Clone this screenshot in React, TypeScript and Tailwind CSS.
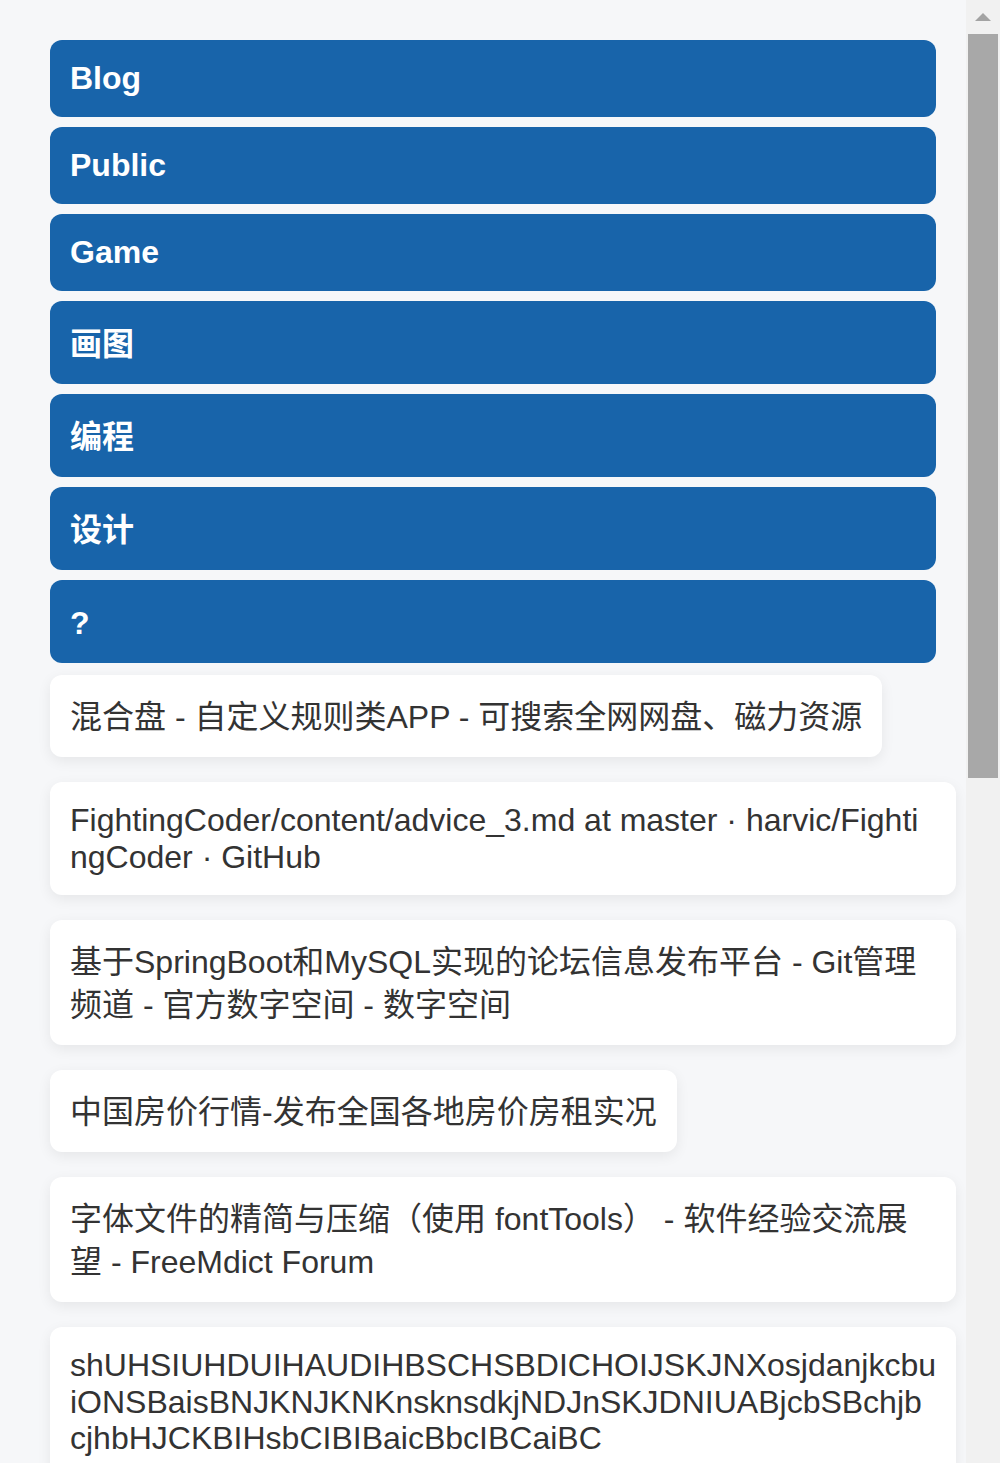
import React from "react";

const blue = [
  { t: "Blog", cjk: false },
  { t: "Public", cjk: false },
  { t: "Game", cjk: false },
  { t: "画图", cjk: true },
  { t: "编程", cjk: true },
  { t: "设计", cjk: true },
  { t: "?", cjk: true },
];

const cards = [
  { t: "混合盘 - 自定义规则类APP - 可搜索全网网盘、磁力资源", lh: "leading-[42px] pt-[21px] pb-[19px]" },
  { t: "FightingCoder/content/advice_3.md at master · harvic/FightingCoder · GitHub", lh: "leading-[36.5px] py-[20px]" },
  { t: "基于SpringBoot和MySQL实现的论坛信息发布平台 - Git管理频道 - 官方数字空间 - 数字空间", lh: "leading-[42.5px] pt-[21px] pb-[19px]" },
  { t: "中国房价行情-发布全国各地房价房租实况", lh: "leading-[42px] pt-[21px] pb-[19px]" },
  { t: "字体文件的精简与压缩（使用 fontTools） - 软件经验交流展望 - FreeMdict Forum", lh: "leading-[42.5px] pt-[21px] pb-[19px]" },
  { t: "shUHSIUHDUIHAUDIHBSCHSBDICHOIJSKJNXosjdanjkcbuiONSBaisBNJKNJKNKnsknsdkjNDJnSKJDNIUABjcbSBchjbcjhbHJCKBIHsbCIBIBaicBbcIBCaiBC", lh: "leading-[36.5px] py-[20px]" },
];

export default function App() {
  return (
    <div
      className="relative h-[1463px] w-[1000px] overflow-hidden bg-[#f6f7f9]"
      style={{ fontFamily: '"Liberation Sans", Arial, "Noto Sans CJK SC", sans-serif' }}
    >
      <div className="flex w-[967px] flex-col items-start pl-[50px] pr-[11px] pt-[40px]">
        <div className="flex flex-col gap-[10px]">
          {blue.map((b) => (
            <div
              key={b.t}
              className={`w-[886px] rounded-[12px] bg-[#1864aa] px-[20px] text-[32px] font-bold text-white ${
                b.cjk ? "leading-[43px] pt-[22px] pb-[18px]" : "leading-[37px] py-[20px]"
              }`}
            >
              {b.t}
            </div>
          ))}
        </div>
        <div className="mt-[12px] flex flex-col items-start gap-[25px]">
          {cards.map((c) => (
            <div
              key={c.t}
              className={`max-w-[906px] break-all rounded-[12px] bg-white px-[20px] text-[32px] text-[#333333] shadow-[0_4px_14px_rgba(0,0,0,0.07)] ${c.lh}`}
            >
              {c.t}
            </div>
          ))}
        </div>
      </div>

      <div className="absolute right-0 top-0 h-[1463px] w-[34px] bg-[#f1f1f1]">
        <div className="flex h-[34px] items-center justify-center">
          <svg width="16" height="9" viewBox="0 0 16 9">
            <polygon points="8,0 16,8 0,8" fill="#a3a3a3" />
          </svg>
        </div>
        <div className="ml-[2px] h-[744px] w-[30px] bg-[#a8a8a8]" />
      </div>
    </div>
  );
}
